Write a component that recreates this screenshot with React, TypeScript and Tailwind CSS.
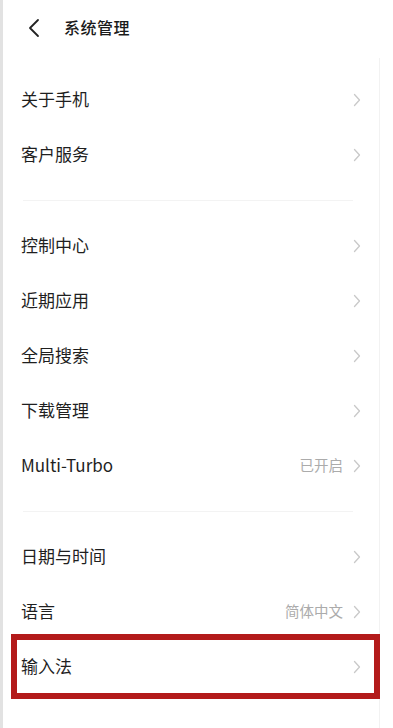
import React from 'react';

type Row = { label: string; value?: string; highlight?: boolean };

const groups: Row[][] = [
  [{ label: '关于手机' }, { label: '客户服务' }],
  [
    { label: '控制中心' },
    { label: '近期应用' },
    { label: '全局搜索' },
    { label: '下载管理' },
    { label: 'Multi-Turbo', value: '已开启' },
  ],
  [{ label: '日期与时间' }, { label: '语言', value: '简体中文' }, { label: '输入法', highlight: true }],
];

const Chevron = () => (
  <svg width="8" height="14" viewBox="0 0 8 14" fill="none" className="shrink-0">
    <path d="M1.5 1.5 L6.5 7 L1.5 12.5" stroke="#c9c9c9" strokeWidth="1.3" strokeLinecap="round" strokeLinejoin="round" />
  </svg>
);

export default function App() {
  return (
    <div
      className="relative w-[393px] h-[728px] bg-white overflow-hidden border-l-[3px] border-[#e2e2e2]"
      style={{ fontFamily: '"Noto Sans CJK SC", "Noto Sans", sans-serif' }}
    >
      {/* faint right edge */}
      <div className="absolute right-[13px] top-[58px] bottom-0 w-px bg-[#f2f2f2]" />

      {/* Header */}
      <div className="h-[56px] flex items-center pl-[24px]">
        <svg width="14" height="20" viewBox="0 0 14 20" fill="none">
          <path d="M11 2 L3 10 L11 18" stroke="#222" strokeWidth="1.8" strokeLinecap="round" strokeLinejoin="round" />
        </svg>
        <span className="ml-[23px] text-[16px] font-medium text-[#1a1a1a] tracking-[0.5px] -translate-y-px">系统管理</span>
      </div>

      <div className="pt-[16px]">
        {groups.map((group, gi) => (
          <div key={gi}>
            {gi > 0 && (
              <div className="h-[36px] flex items-center pl-[20px] pr-[40px]">
                <div className="h-px w-full bg-[#f3f3f3]" />
              </div>
            )}
            {group.map((row) => (
              <div key={row.label} className="relative h-[55px] flex items-center pl-[18px] pr-[32px]">
                <span className="flex-1 text-[17px] text-[#1f1f1f] -translate-y-px">{row.label}</span>
                {row.value && <span className="mr-[10px] text-[14.5px] text-[#ababab] -translate-y-px">{row.value}</span>}
                <Chevron />
                {row.highlight && (
                  <div className="absolute left-[8px] right-[13px] -top-[5px] -bottom-[5px] border-[6px] border-[#b31a1a]" />
                )}
              </div>
            ))}
          </div>
        ))}
      </div>
    </div>
  );
}
